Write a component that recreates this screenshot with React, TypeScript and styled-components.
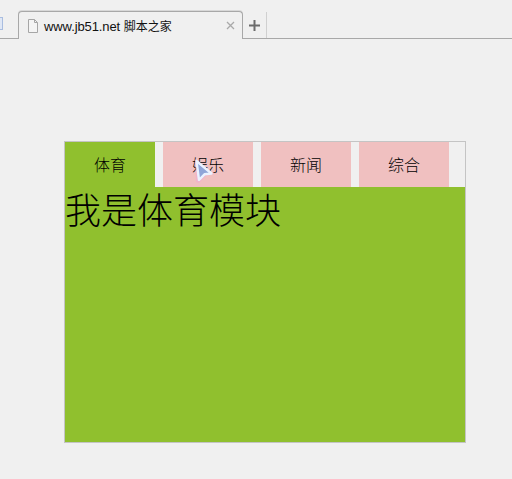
import { useState } from "react";
import styled, { createGlobalStyle } from "styled-components";

const GlobalStyle = createGlobalStyle`
  html, body {
    margin: 0;
    padding: 0;
    background: #f0f0f0;
    overflow: hidden;
  }
`;

const Page = styled.div`
  width: 512px;
  height: 479px;
  background: #f0f0f0;
  font-family: "Liberation Sans", "Noto Sans CJK SC", sans-serif;
`;

const TabStrip = styled.div`
  height: 39px;
  box-sizing: border-box;
  display: flex;
  align-items: flex-end;
  border-bottom: 1px solid #a8a8a8;
  position: relative;
`;

const SideSliver = styled.div`
  position: absolute;
  left: 0;
  top: 17px;
  width: 3px;
  height: 13px;
  box-sizing: border-box;
  background: #dfe7f5;
  border: 1px solid #a9bde0;
  border-left: 0;
`;

const BrowserTab = styled.div`
  margin-left: 18px;
  width: 225px;
  height: 28px;
  margin-bottom: -1px;
  box-sizing: border-box;
  display: flex;
  align-items: center;
  padding: 0 7px 0 8px;
  background: #f0f0f0;
  border: 1px solid #a8a8a8;
  border-bottom: 0;
  border-radius: 4px 4px 0 0;
  box-shadow: 0 -1px 0 #d8d8d8;
  font-size: 13px;
  color: #111;
`;

const TabTitle = styled.span`
  flex: 1;
  margin-left: 5px;
  white-space: nowrap;
  letter-spacing: -0.1px;
`;

const SiteName = styled.span`
  font-size: 12px;
  letter-spacing: 0;
`;

const NewTab = styled.div`
  width: 24px;
  height: 26px;
  display: flex;
  align-items: center;
  justify-content: center;
  box-sizing: border-box;
  border-right: 1px solid #d0d0d0;
`;

const Stage = styled.div`
  padding: 102px 0 0 64px;
`;

const Box = styled.div`
  width: 400px;
  height: 300px;
  border: 1px solid #c4c4c4;
  position: relative;
`;

const TabList = styled.ul`
  list-style: none;
  margin: 0;
  padding: 0;
  display: flex;
  gap: 8px;
  height: 45px;
`;

const TabItem = styled.li<{ $active: boolean }>`
  width: 90px;
  height: 45px;
  line-height: 45px;
  text-align: center;
  font-family: "Noto Sans CJK SC", sans-serif;
  font-size: 16px;
  font-weight: 300;
  color: #000;
  cursor: pointer;
  background: ${(p) => (p.$active ? "#90c02e" : "#f0c0c0")};
`;

const Panel = styled.div`
  height: 255px;
  background: #90c02e;
  font-size: 36px;
  line-height: 42px;
  color: #000;
  font-family: "Noto Sans CJK SC", sans-serif;
  font-weight: 300;
`;

const Pointer = styled.svg`
  position: absolute;
  left: 126px;
  top: 15px;
  pointer-events: none;
`;

const FileIcon = () => (
  <svg width="12" height="14" viewBox="0 0 12 14" fill="none">
    <path d="M1.5.5h6l3 3v10h-9z" fill="#f4f4f4" stroke="#a6a6a6" />
    <path d="M7.5.5v3h3" stroke="#a6a6a6" />
  </svg>
);

const CloseIcon = () => (
  <svg width="9" height="9" viewBox="0 0 9 9">
    <path d="M1 1l7 7M8 1l-7 7" stroke="#a9a9a9" strokeWidth="1.3" />
  </svg>
);

const PlusIcon = () => (
  <svg width="11" height="11" viewBox="0 0 11 11">
    <path d="M5.5 0v11M0 5.5h11" stroke="#6b6b6b" strokeWidth="2" />
  </svg>
);

const tabs = ["体育", "娱乐", "新闻", "综合"];
const panels = ["我是体育模块", "我是娱乐模块", "我是新闻模块", "我是综合模块"];

const App = () => {
  const [current, setCurrent] = useState(0);

  return (
    <Page>
      <GlobalStyle />
      <TabStrip>
        <SideSliver />
        <BrowserTab>
          <FileIcon />
          <TabTitle>
            www.jb51.net <SiteName>脚本之家</SiteName>
          </TabTitle>
          <CloseIcon />
        </BrowserTab>
        <NewTab>
          <PlusIcon />
        </NewTab>
      </TabStrip>
      <Stage>
        <Box>
          <TabList>
            {tabs.map((name, i) => (
              <TabItem key={name} $active={i === current} onMouseEnter={() => setCurrent(i)}>
                {name}
              </TabItem>
            ))}
          </TabList>
          <Panel>{panels[current]}</Panel>
          <Pointer width="28" height="28" viewBox="0 0 28 28">
            <path d="M4 2l19 15-8 2-7 7-3-1z" fill="#f0a8d0" opacity="0.55" />
            <path d="M5.5 4l15 12.5-7 .8L8 23z" fill="#8fa5d8" stroke="#eaf2ff" strokeWidth="2.4" strokeLinejoin="round" />
          </Pointer>
        </Box>
      </Stage>
    </Page>
  );
};

export default App;
